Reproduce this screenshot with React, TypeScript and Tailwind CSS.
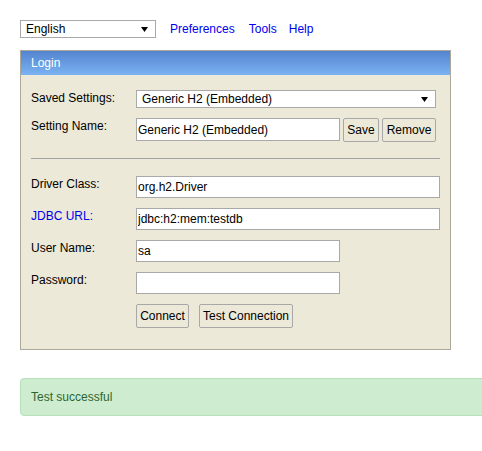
import React from "react";

const Arrow = () => (
  <svg width="7" height="5" viewBox="0 0 7 5" className="shrink-0">
    <polygon points="0,0 7,0 3.5,5" fill="#000" />
  </svg>
);

function FakeSelect({ value, className }: { value: string; className: string }) {
  return (
    <div
      className={`flex items-center justify-between border border-[#a9a9a9] bg-white pl-[5px] pr-[7px] ${className}`}
    >
      <span>{value}</span>
      <Arrow />
    </div>
  );
}

function Field({ value, className }: { value: string; className: string }) {
  return (
    <input
      readOnly
      value={value}
      className={`border border-[#a9a9a9] bg-white px-[1px] text-[12px] text-black outline-none ${className}`}
    />
  );
}

function Btn({ label, className }: { label: string; className: string }) {
  return (
    <button className={`h-[24px] rounded-[2px] border border-[#a8a8a8] bg-[#ece9d8] text-[12px] text-black ${className}`}>
      {label}
    </button>
  );
}

function Row({
  label,
  link,
  children,
}: {
  label: string;
  link?: boolean;
  children: React.ReactNode;
}) {
  return (
    <div className="flex items-start">
      <div
        className={`w-[105px] shrink-0 pt-[1px] leading-[14px] ${link ? "text-[#0000ee]" : "text-black"}`}
      >
        {label}
      </div>
      <div className="flex items-start gap-[3px]">{children}</div>
    </div>
  );
}

export default function App() {
  return (
    <div
      className="min-h-[451px] overflow-hidden bg-white pl-[20px] pt-[20px] text-[12px] text-black"
      style={{ fontFamily: '"Liberation Sans", Arial, sans-serif' }}
    >
      <div className="flex h-[18px] items-center">
        <FakeSelect value="English" className="h-[18px] w-[136px]" />
        <a className="ml-[14px] text-[#0000ee]">Preferences</a>
        <a className="ml-[14px] text-[#0000ee]">Tools</a>
        <a className="ml-[12px] text-[#0000ee]">Help</a>
      </div>

      <div className="mt-[12px] w-[431px] border border-[#aca899]">
        <div className="flex h-[24px] items-center bg-gradient-to-b from-[#5484cf] to-[#7ab3f2] px-[10px] text-white">
          Login
        </div>
        <div className="flex flex-col bg-[#ece9d8] px-[10px] pb-[21px] pt-[15px]">
          <Row label="Saved Settings:">
            <FakeSelect value="Generic H2 (Embedded)" className="h-[18px] w-[300px]" />
          </Row>
          <div className="mt-[10px]">
            <Row label="Setting Name:">
              <Field value="Generic H2 (Embedded)" className="h-[23px] w-[204px]" />
              <Btn label="Save" className="w-[36px]" />
              <Btn label="Remove" className="w-[54px]" />
            </Row>
          </div>
          <div className="mt-[16px] h-[1px] w-full bg-[#a3a3a3]" />
          <div className="mt-[17px] flex flex-col gap-[10px]">
            <Row label="Driver Class:">
              <Field value="org.h2.Driver" className="h-[22px] w-[304px]" />
            </Row>
            <Row label="JDBC URL:" link>
              <Field value="jdbc:h2:mem:testdb" className="h-[22px] w-[304px]" />
            </Row>
            <Row label="User Name:">
              <Field value="sa" className="h-[22px] w-[204px]" />
            </Row>
            <Row label="Password:">
              <Field value="" className="h-[22px] w-[204px]" />
            </Row>
            <div className="flex pl-[105px]">
              <Btn label="Connect" className="w-[53px]" />
              <Btn label="Test Connection" className="ml-[10px] w-[94px]" />
            </div>
          </div>
        </div>
      </div>

      <div className="mt-[28px] flex h-[38px] w-[600px] items-center rounded-[4px] border border-[#b8e0bb] bg-[#ceedd0] pl-[10px] text-[#2b6630]">
        Test successful
      </div>
    </div>
  );
}
